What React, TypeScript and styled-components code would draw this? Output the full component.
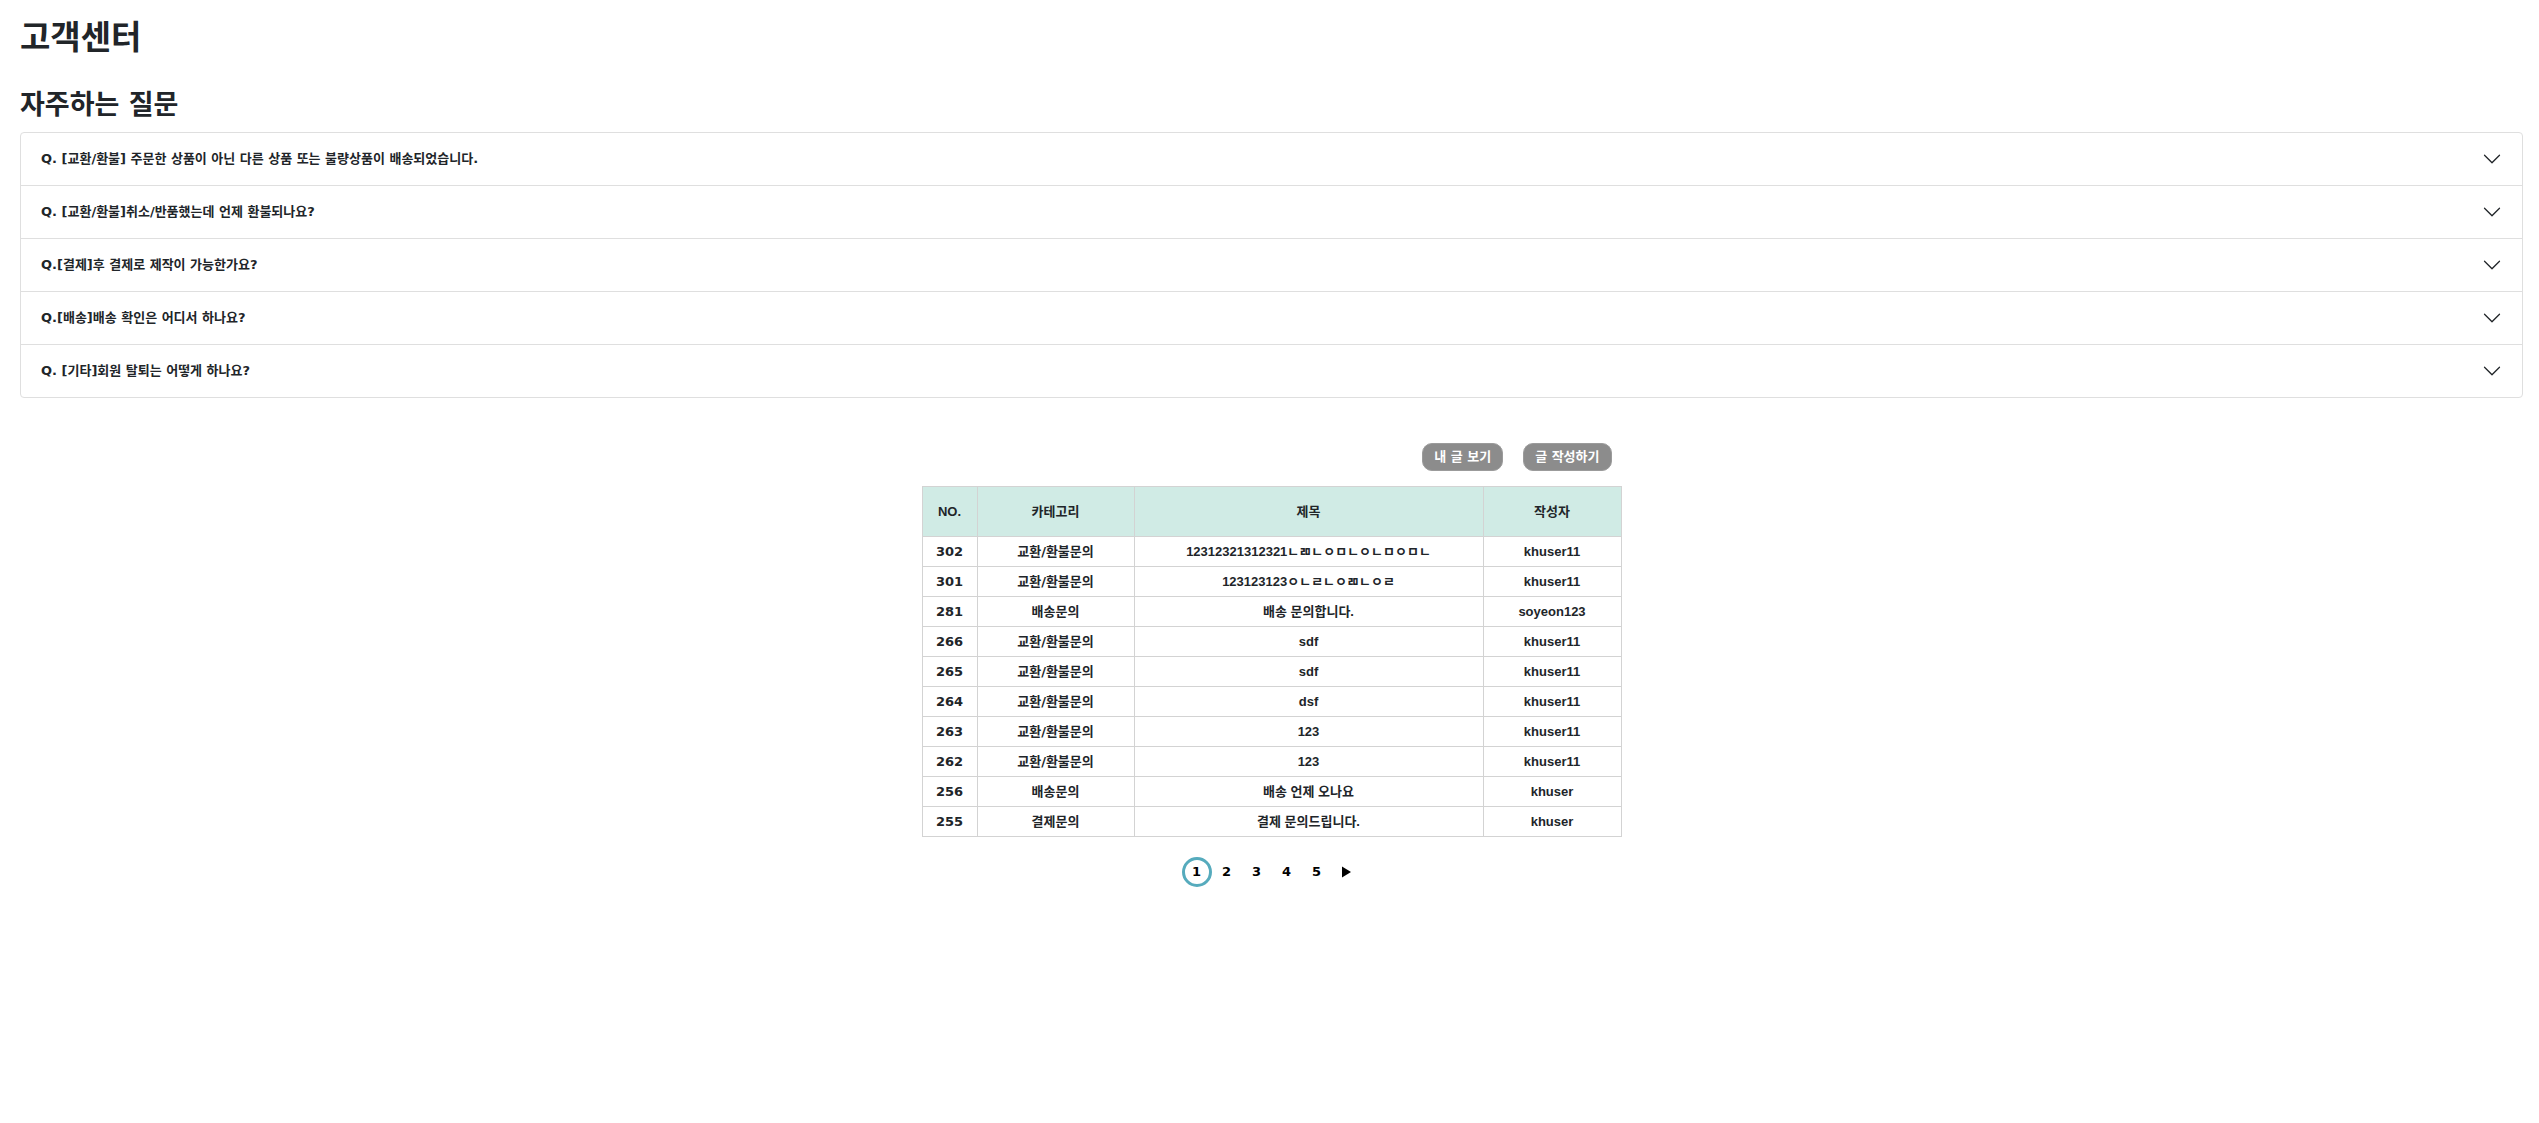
import React, { useState } from "react";
import styled, { createGlobalStyle } from "styled-components";

const wide = `"DejaVu Sans", "Noto Sans CJK KR", sans-serif`;
const narrow = `"Liberation Sans", "Noto Sans CJK KR", sans-serif`;

const GlobalStyle = createGlobalStyle`
  *, *::before, *::after { box-sizing: border-box; }
  body {
    margin: 0;
    background: #fff;
    color: #212529;
    font: 700 13px/20px ${narrow};
  }
`;

const Page = styled.main`
  padding: 14px 16px 20px 20px;
`;

const Title = styled.h1`
  margin: 0 0 23px;
  font: 700 33px/48px ${wide};
`;

const Subtitle = styled.h2`
  margin: 0 0 7px;
  font: 700 27px/40px ${wide};
`;

const Accordion = styled.section`
  border: 1px solid #dfdfdf;
  border-radius: 4px;
`;

const Item = styled.div`
  & + & {
    border-top: 1px solid #dfdfdf;
  }
`;

const ItemHeading = styled.h3`
  margin: 0;
`;

const Question = styled.button`
  display: flex;
  align-items: center;
  justify-content: space-between;
  width: 100%;
  padding: 16px 20px;
  border: 0;
  background: none;
  color: inherit;
  font: 700 13px/20px ${wide};
  text-align: left;
  cursor: pointer;
`;

const Chevron = styled.svg<{ $open: boolean }>`
  width: 20px;
  height: 20px;
  flex: none;
  transform: ${(p) => (p.$open ? "rotate(180deg)" : "none")};
`;

const Answer = styled.p`
  margin: 0;
  padding: 16px 20px;
`;

const Board = styled.section`
  width: 700px;
  max-width: 100%;
  margin: 45px auto 0;
`;

const Actions = styled.div`
  display: flex;
  justify-content: flex-end;
  gap: 20px;
  padding-right: 10px;
  margin-bottom: 15px;
`;

const ActionButton = styled.button`
  height: 28px;
  padding: 0 11px;
  border: 1px solid #9b9b9b;
  border-radius: 10px;
  background: #8c8c8c;
  color: #fff;
  font: 700 13px/20px ${wide};
  cursor: pointer;
`;

const Table = styled.table`
  width: 100%;
  table-layout: fixed;
  border-collapse: collapse;
  text-align: center;

  th,
  td {
    height: 30px;
    padding: 0;
    border: 1px solid #d3d3d3;
  }

  th {
    height: 50px;
    background: #d0ebe5;
  }
`;

const Col = styled.col<{ $width?: number }>`
  width: ${(p) => (p.$width ? `${p.$width}px` : "auto")};
`;

const WideCell = styled.td`
  font-family: ${wide};
`;

const Pagination = styled.nav`
  display: flex;
  justify-content: center;
  margin-top: 20px;
`;

const PageLink = styled.a<{ $current?: boolean }>`
  display: flex;
  align-items: center;
  justify-content: center;
  width: 30px;
  height: 30px;
  border: 3px solid ${(p) => (p.$current ? "#56abbd" : "transparent")};
  border-radius: 50%;
  color: #000;
  font-family: ${wide};
  text-decoration: none;
`;

const questions = [
  "Q. [교환/환불] 주문한 상품이 아닌 다른 상품 또는 불량상품이 배송되었습니다.",
  "Q. [교환/환불]취소/반품했는데 언제 환불되나요?",
  "Q.[결제]후 결제로 제작이 가능한가요?",
  "Q.[배송]배송 확인은 어디서 하나요?",
  "Q. [기타]회원 탈퇴는 어떻게 하나요?",
];

const posts = [
  [302, "교환/환불문의", "12312321312321ㄴㄻㄴㅇㅁㄴㅇㄴㅁㅇㅁㄴ", "khuser11"],
  [301, "교환/환불문의", "123123123ㅇㄴㄹㄴㅇㄻㄴㅇㄹ", "khuser11"],
  [281, "배송문의", "배송 문의합니다.", "soyeon123"],
  [266, "교환/환불문의", "sdf", "khuser11"],
  [265, "교환/환불문의", "sdf", "khuser11"],
  [264, "교환/환불문의", "dsf", "khuser11"],
  [263, "교환/환불문의", "123", "khuser11"],
  [262, "교환/환불문의", "123", "khuser11"],
  [256, "배송문의", "배송 언제 오나요", "khuser"],
  [255, "결제문의", "결제 문의드립니다.", "khuser"],
];

export default function App() {
  const [open, setOpen] = useState<number | null>(null);

  return (
    <>
      <GlobalStyle />
      <Page>
        <Title>고객센터</Title>
        <Subtitle>자주하는 질문</Subtitle>
        <Accordion>
          {questions.map((question, i) => (
            <Item key={question}>
              <ItemHeading>
                <Question
                  type="button"
                  aria-expanded={open === i}
                  onClick={() => setOpen(open === i ? null : i)}
                >
                  {question}
                  <Chevron $open={open === i} viewBox="0 0 16 16" fill="#212529" aria-hidden="true">
                    <path
                      fillRule="evenodd"
                      d="M1.646 4.646a.5.5 0 0 1 .708 0L8 10.293l5.646-5.647a.5.5 0 0 1 .708.708l-6 6a.5.5 0 0 1-.708 0l-6-6a.5.5 0 0 1 0-.708z"
                    />
                  </Chevron>
                </Question>
              </ItemHeading>
              {open === i && <Answer>{question}</Answer>}
            </Item>
          ))}
        </Accordion>

        <Board>
          <Actions>
            <ActionButton type="button">내 글 보기</ActionButton>
            <ActionButton type="button">글 작성하기</ActionButton>
          </Actions>
          <Table>
            <colgroup>
              <Col $width={55} />
              <Col $width={157} />
              <Col />
              <Col $width={138} />
            </colgroup>
            <thead>
              <tr>
                <th scope="col">NO.</th>
                <th scope="col">카테고리</th>
                <th scope="col">제목</th>
                <th scope="col">작성자</th>
              </tr>
            </thead>
            <tbody>
              {posts.map(([no, category, title, writer]) => (
                <tr key={no}>
                  <WideCell>{no}</WideCell>
                  <WideCell>{category}</WideCell>
                  <td>{title}</td>
                  <td>{writer}</td>
                </tr>
              ))}
            </tbody>
          </Table>
          <Pagination>
            {[1, 2, 3, 4, 5].map((n) => (
              <PageLink key={n} href={`#${n}`} $current={n === 1}>
                {n}
              </PageLink>
            ))}
            <PageLink href="#next" aria-label="다음">
              <svg width="9" height="12" viewBox="0 0 9 12" aria-hidden="true">
                <path d="M0 0.5 L9 6 L0 11.5 Z" fill="#000" />
              </svg>
            </PageLink>
          </Pagination>
        </Board>
      </Page>
    </>
  );
}
